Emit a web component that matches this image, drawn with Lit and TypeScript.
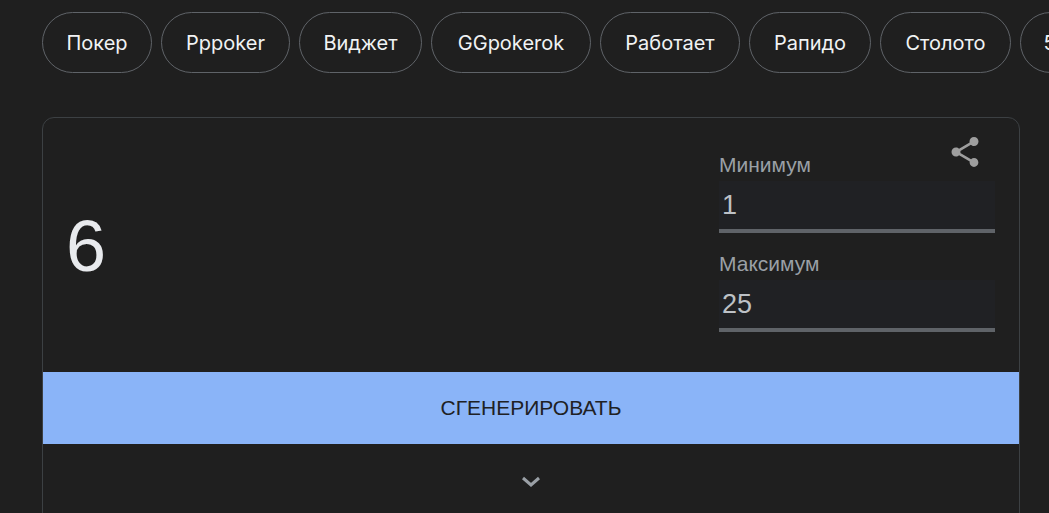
import { LitElement, html, css } from "lit"
import { customElement } from "lit/decorators.js"

const CHIPS = [
  { label: "Покер", width: 110 },
  { label: "Pppoker", width: 129 },
  { label: "Виджет", width: 123 },
  { label: "GGpokerok", width: 160 },
  { label: "Работает", width: 140 },
  { label: "Рапидо", width: 122 },
  { label: "Столото", width: 131 },
  { label: "5 букв", width: 110 },
]

@customElement("app-root")
export class AppRoot extends LitElement {
  static styles = css`
    :host {
      display: block;
      height: 513px;
      overflow: hidden;
      background: #1f1f1f;
      font-family: "Liberation Sans", Arial, sans-serif;
    }

    .chips {
      display: flex;
      gap: 9px;
      padding: 12px 0 0 42px;
      overflow: hidden;
    }

    .chip {
      flex: none;
      height: 61px;
      box-sizing: border-box;
      display: flex;
      align-items: center;
      justify-content: center;
      border: 1px solid #5f6368;
      border-radius: 31px;
      color: #f1f3f4;
      font-family: Inter, sans-serif;
      font-size: 20px;
      white-space: nowrap;
    }

    .card {
      position: relative;
      box-sizing: border-box;
      width: 978px;
      height: 420px;
      margin: 44px 0 0 42px;
      border: 1px solid #3c4043;
      border-radius: 12px;
      overflow: hidden;
    }

    .top {
      display: flex;
      justify-content: space-between;
      align-items: flex-start;
      height: 254px;
      padding: 34px 24px 0 23px;
      box-sizing: border-box;
    }

    .result {
      margin-top: 42px;
      color: #e8eaed;
      font-size: 72px;
      line-height: 104px;
    }

    .fields {
      width: 276px;
    }

    .field {
      margin-bottom: 18px;
    }

    .field label {
      display: block;
      height: 29px;
      margin-top: -1px;
      padding-bottom: 1px;
      color: #9aa0a6;
      font-size: 21px;
      line-height: 28px;
    }

    .field input {
      display: block;
      width: 100%;
      height: 52px;
      box-sizing: border-box;
      padding: 0 3px;
      border: 0;
      border-bottom: 4px solid #5f6368;
      background: #202124;
      color: #bdc1c6;
      font-family: inherit;
      font-size: 27px;
      outline: none;
    }

    .share {
      position: absolute;
      top: 16px;
      right: 36px;
      width: 36px;
      height: 36px;
      fill: #9e9e9e;
    }

    .generate {
      display: block;
      width: 100%;
      height: 72px;
      border: 0;
      background: #8ab4f8;
      color: #202124;
      font-family: inherit;
      font-size: 21px;
    }

    .more {
      display: flex;
      justify-content: center;
      padding-top: 25px;
    }

    .more svg {
      width: 24px;
      height: 24px;
      fill: none;
      stroke: #9aa0a6;
      stroke-width: 3;
    }
  `

  render() {
    return html`
      <div class="chips">
        ${CHIPS.map((chip) => html`<div class="chip" style="width: ${chip.width}px">${chip.label}</div>`)}
      </div>
      <div class="card">
        <svg class="share" viewBox="0 0 24 24">
          <path
            d="M18 16.08c-.76 0-1.44.3-1.96.77L8.91 12.7c.05-.23.09-.46.09-.7s-.04-.47-.09-.7l7.05-4.11c.54.5 1.25.81 2.04.81 1.66 0 3-1.34 3-3s-1.34-3-3-3-3 1.34-3 3c0 .24.04.47.09.7L8.04 9.81C7.5 9.31 6.79 9 6 9c-1.66 0-3 1.34-3 3s1.34 3 3 3c.79 0 1.5-.31 2.04-.81l7.12 4.16c-.05.21-.08.43-.08.65 0 1.61 1.31 2.92 2.92 2.92s2.92-1.31 2.92-2.92-1.31-2.92-2.92-2.92z"
          />
        </svg>
        <div class="top">
          <div class="result">6</div>
          <div class="fields">
            <div class="field">
              <label>Минимум</label>
              <input value="1" />
            </div>
            <div class="field">
              <label>Максимум</label>
              <input value="25" />
            </div>
          </div>
        </div>
        <button class="generate">СГЕНЕРИРОВАТЬ</button>
        <div class="more">
          <svg viewBox="0 0 24 24"><path d="M4 9l8 7 8-7" /></svg>
        </div>
      </div>
    `
  }
}
